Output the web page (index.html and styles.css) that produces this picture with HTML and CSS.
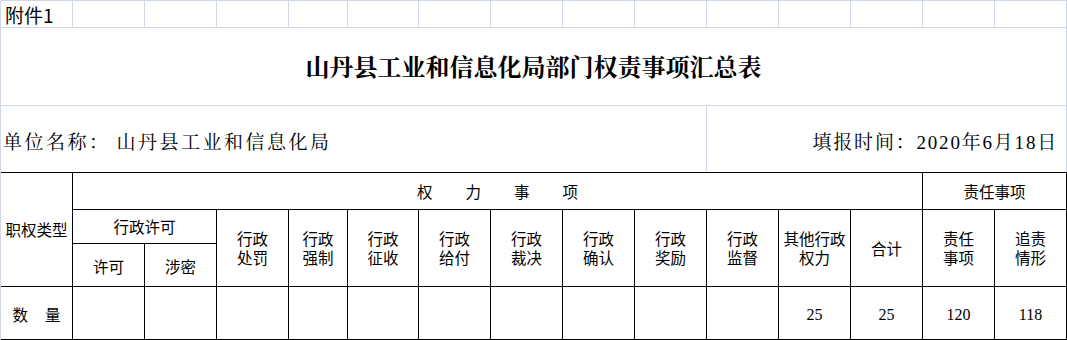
FILE: index.html
```html
<!DOCTYPE html>
<html lang="zh-CN">
<head>
<meta charset="utf-8">
<title>山丹县工业和信息化局部门权责事项汇总表</title>
<link rel="stylesheet" href="styles.css">
</head>
<body>
<div class="sheet">
  <div class="top">
    <div class="cell attach">附件1</div>
    <div class="cell"></div><div class="cell"></div><div class="cell"></div><div class="cell"></div>
    <div class="cell"></div><div class="cell"></div><div class="cell"></div><div class="cell"></div>
    <div class="cell"></div><div class="cell"></div><div class="cell"></div><div class="cell"></div>
    <div class="cell"></div><div class="cell"></div>
    <div class="cell title">山丹县工业和信息化局部门权责事项汇总表</div>
    <div class="cell unit">单位名称：<span class="unit-name">山丹县工业和信息化局</span></div>
    <div class="cell date">填报时间：2020年6月18日</div>
  </div>
  <div class="tbl">
    <div class="td type">职权类型</div>
    <div class="td power"><span>权</span><span>力</span><span>事</span><span>项</span></div>
    <div class="td duty">责任事项</div>
    <div class="td license">行政许可</div>
    <div class="td sub c2">许可</div>
    <div class="td sub c3">涉密</div>
    <div class="td head c4"><span>行政</span><span>处罚</span></div>
    <div class="td head c5"><span>行政</span><span>强制</span></div>
    <div class="td head c6"><span>行政</span><span>征收</span></div>
    <div class="td head c7"><span>行政</span><span>给付</span></div>
    <div class="td head c8"><span>行政</span><span>裁决</span></div>
    <div class="td head c9"><span>行政</span><span>确认</span></div>
    <div class="td head c10"><span>行政</span><span>奖励</span></div>
    <div class="td head c11"><span>行政</span><span>监督</span></div>
    <div class="td head c12"><span>其他行政</span><span>权力</span></div>
    <div class="td head c13"><span>合计</span></div>
    <div class="td head c14"><span>责任</span><span>事项</span></div>
    <div class="td head c15"><span>追责</span><span>情形</span></div>
    <div class="td qty"><span>数</span><span>量</span></div>
    <div class="td"></div><div class="td"></div><div class="td"></div><div class="td"></div><div class="td"></div>
    <div class="td"></div><div class="td"></div><div class="td"></div><div class="td"></div><div class="td"></div>
    <div class="td num">25</div>
    <div class="td num">25</div>
    <div class="td num">120</div>
    <div class="td num">118</div>
  </div>
</div>
</body>
</html>
```
FILE: styles.css
```css
html, body {
  margin: 0;
  padding: 0;
  background: #fff;
}
body {
  font-family: "Noto Sans CJK SC", sans-serif;
  color: #000;
}
.sheet {
  width: 1067px;
}
.top {
  display: grid;
  grid-template-columns: repeat(4, 71px) 58px 70px repeat(9, 71px);
  grid-template-rows: 26px 77px 66px;
  gap: 1px;
  padding: 1px 1px 0 1px;
  background: #d0d7e5;
}
.cell {
  background: #fff;
  display: flex;
  align-items: center;
  white-space: nowrap;
}
.attach {
  font-size: 19px;
  padding-left: 4px;
  line-height: 1;
}
.title {
  grid-column: 1 / -1;
  justify-content: center;
  font-family: "Noto Serif CJK SC", "Noto Sans CJK SC", serif;
  font-weight: 700;
  font-size: 24px;
  padding-bottom: 2px;
}
.unit {
  grid-column: 1 / 11;
  font-family: "Liberation Serif", "Noto Serif CJK SC", "Noto Sans CJK SC", serif;
  font-size: 19px;
  letter-spacing: 2.5px;
  padding-left: 2px;
  padding-top: 3px;
}
.unit-name {
  margin-left: 6px;
}
.date {
  grid-column: 11 / -1;
  justify-content: flex-end;
  font-family: "Liberation Serif", "Noto Serif CJK SC", "Noto Sans CJK SC", serif;
  font-size: 19px;
  letter-spacing: 1.8px;
  padding-right: 8px;
  padding-top: 3px;
}
.tbl {
  display: grid;
  grid-template-columns: repeat(4, 71px) 58px 70px repeat(9, 71px);
  grid-template-rows: 36px 33px 42px 52px;
  gap: 1px;
  padding: 1px 1px 1px 0;
  border-left: 1px solid #d0d7e5;
  background: #000;
}
.td {
  background: #fff;
  display: flex;
  align-items: center;
  justify-content: center;
  text-align: center;
  font-size: 15.5px;
  line-height: 19px;
  white-space: nowrap;
}
.type { grid-column: 1; grid-row: 1 / 4; }
.power { grid-column: 2 / 14; grid-row: 1; gap: 33px; }
.duty { grid-column: 14 / 16; grid-row: 1; }
.license { grid-column: 2 / 4; grid-row: 2; }
.sub { grid-row: 3; padding-top: 2px; }
.c2 { grid-column: 2; }
.c3 { grid-column: 3; }
.head {
  grid-row: 2 / 4;
  flex-direction: column;
  gap: 0;
}
.head span {
  display: block;
  height: 19px;
  line-height: 19px;
}
.c4 { grid-column: 4; }
.c5 { grid-column: 5; }
.c6 { grid-column: 6; }
.c7 { grid-column: 7; }
.c8 { grid-column: 8; }
.c9 { grid-column: 9; }
.c10 { grid-column: 10; }
.c11 { grid-column: 11; }
.c12 { grid-column: 12; }
.c13 { grid-column: 13; }
.c14 { grid-column: 14; }
.c15 { grid-column: 15; }
.qty { gap: 17px; padding-top: 3px; }
.num {
  font-family: "Liberation Serif", serif;
  font-size: 16px;
  padding-top: 3px;
}
```
